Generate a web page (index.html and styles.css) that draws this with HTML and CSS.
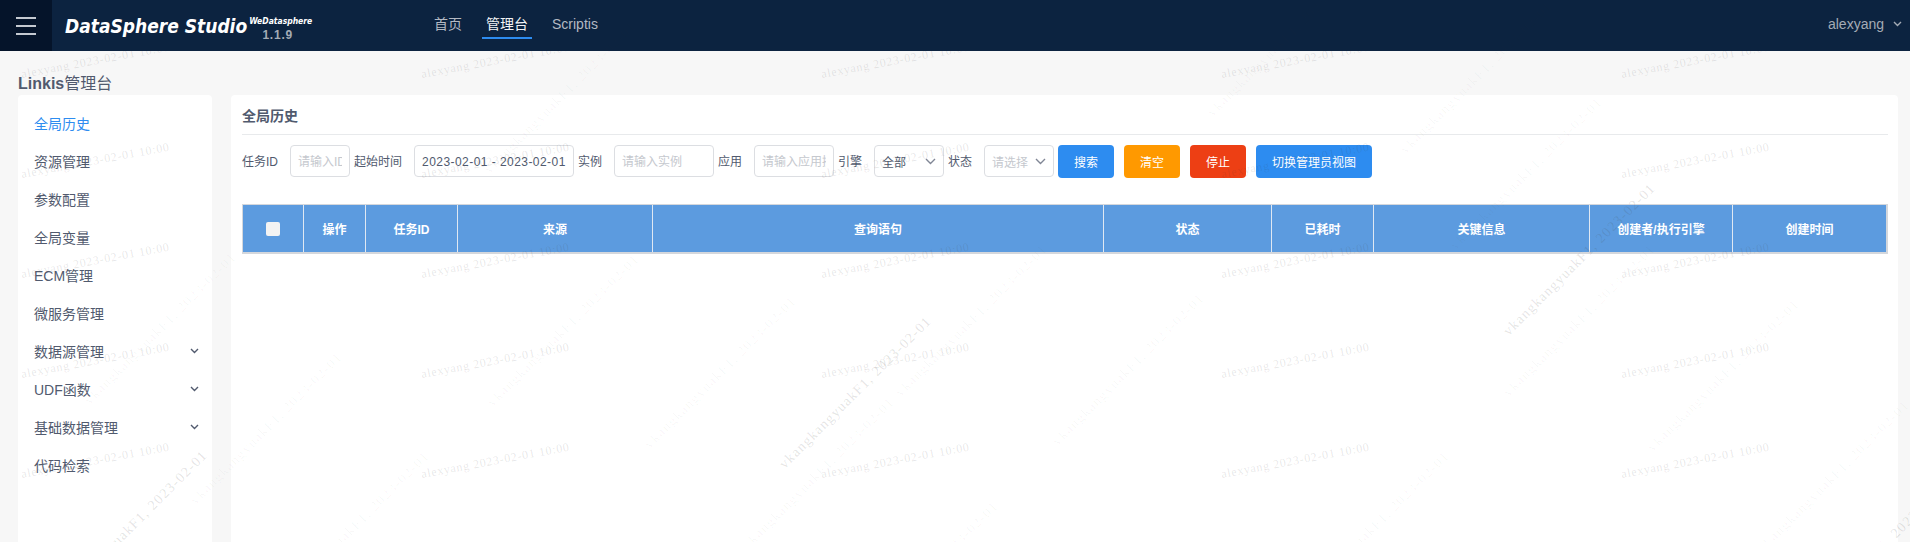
FILE: index.html
```html
<!DOCTYPE html>
<html lang="zh-CN">
<head>
<meta charset="utf-8">
<title>Linkis管理台</title>
<link rel="stylesheet" href="styles.css">
</head>
<body>
<svg class="wm wm-a" width="1910" height="542" aria-hidden="true">
  <defs><text id="wa" class="wa" transform="rotate(-10.5)">alexyang 2023-02-01 10:00</text></defs>
  <use href="#wa" x="22" y="78"/><use href="#wa" x="422" y="78"/><use href="#wa" x="822" y="78"/><use href="#wa" x="1222" y="78"/><use href="#wa" x="1622" y="78"/>
  <use href="#wa" x="22" y="178"/><use href="#wa" x="422" y="178"/><use href="#wa" x="822" y="178"/><use href="#wa" x="1222" y="178"/><use href="#wa" x="1622" y="178"/>
  <use href="#wa" x="22" y="278"/><use href="#wa" x="422" y="278"/><use href="#wa" x="822" y="278"/><use href="#wa" x="1222" y="278"/><use href="#wa" x="1622" y="278"/>
  <use href="#wa" x="22" y="378"/><use href="#wa" x="422" y="378"/><use href="#wa" x="822" y="378"/><use href="#wa" x="1222" y="378"/><use href="#wa" x="1622" y="378"/>
  <use href="#wa" x="22" y="478"/><use href="#wa" x="422" y="478"/><use href="#wa" x="822" y="478"/><use href="#wa" x="1222" y="478"/><use href="#wa" x="1622" y="478"/>
</svg>
<svg class="wm wm-b" width="1910" height="542" aria-hidden="true">
  <defs>
    <text id="vd" class="vd" text-anchor="end" transform="rotate(-45)">vkangkangyuakF1, 2023-02-01</text>
    <text id="vf" class="vf" text-anchor="end" transform="rotate(-45)">vkangkangyuakF1, 2023-02-01</text>
  </defs>
  <use href="#vd" x="208" y="456"/><use href="#vd" x="932" y="322"/><use href="#vd" x="1656" y="189"/><use href="#vf" x="637" y="27"/><use href="#vd" x="1951" y="484"/>
  <use href="#vf" x="237" y="258"/><use href="#vf" x="343" y="358"/><use href="#vf" x="430" y="457"/><use href="#vf" x="640" y="260"/><use href="#vf" x="797" y="302"/><use href="#vf" x="895" y="403"/><use href="#vf" x="999" y="507"/><use href="#vf" x="1048" y="250"/><use href="#vf" x="1205" y="299"/><use href="#vf" x="1450" y="457"/><use href="#vf" x="1553" y="7"/><use href="#vf" x="1603" y="103"/><use href="#vf" x="1656" y="250"/><use href="#vf" x="1800" y="305"/><use href="#vf" x="1910" y="406"/><use href="#vf" x="1360" y="-30"/>
</svg>

<header class="topbar">
  <button class="menu-btn" aria-label="menu"><span></span><span></span><span></span></button>
  <div class="logo">
    <span class="logo-name">DataSphere Studio</span>
    <span class="logo-side"><span class="logo-sup">WeDatasphere</span><span class="logo-ver">1.1.9</span></span>
  </div>
  <nav class="nav">
    <a class="nav-item">首页</a>
    <a class="nav-item active">管理台</a>
    <a class="nav-item">Scriptis</a>
  </nav>
  <div class="user">alexyang
    <svg class="chev" width="9" height="6" viewBox="0 0 9 6"><path d="M1 1l3.5 3.5L8 1"/></svg>
  </div>
</header>

<main class="page">
  <h1 class="page-title">Linkis<span class="page-title-cn">管理台</span></h1>
  <div class="columns">
    <aside class="sidebar">
      <div class="side-item active">全局历史</div>
      <div class="side-item">资源管理</div>
      <div class="side-item">参数配置</div>
      <div class="side-item">全局变量</div>
      <div class="side-item">ECM管理</div>
      <div class="side-item">微服务管理</div>
      <div class="side-item">数据源管理<svg class="chev" width="9" height="6" viewBox="0 0 9 6"><path d="M1 1l3.5 3.5L8 1"/></svg></div>
      <div class="side-item">UDF函数<svg class="chev" width="9" height="6" viewBox="0 0 9 6"><path d="M1 1l3.5 3.5L8 1"/></svg></div>
      <div class="side-item">基础数据管理<svg class="chev" width="9" height="6" viewBox="0 0 9 6"><path d="M1 1l3.5 3.5L8 1"/></svg></div>
      <div class="side-item">代码检索</div>
    </aside>
    <section class="panel">
      <h2 class="panel-title">全局历史</h2>
      <form class="filters">
        <label class="f-label">任务ID</label>
        <input class="f-input w60" placeholder="请输入ID">
        <label class="f-label">起始时间</label>
        <input class="f-input w160 date" value="2023-02-01 - 2023-02-01">
        <label class="f-label">实例</label>
        <input class="f-input w100" placeholder="请输入实例">
        <label class="f-label">应用</label>
        <input class="f-input w80" placeholder="请输入应用接口">
        <label class="f-label">引擎</label>
        <div class="f-select w70"><span>全部</span><svg class="chev" width="11" height="7" viewBox="0 0 11 7"><path d="M1 1l4.5 4.5L10 1"/></svg></div>
        <label class="f-label">状态</label>
        <div class="f-select w70 empty"><span>请选择</span><svg class="chev" width="11" height="7" viewBox="0 0 11 7"><path d="M1 1l4.5 4.5L10 1"/></svg></div>
        <button type="button" class="btn blue w56">搜索</button>
        <button type="button" class="btn orange w56">清空</button>
        <button type="button" class="btn red w56">停止</button>
        <button type="button" class="btn blue w116">切换管理员视图</button>
      </form>
      <div class="grid-head">
        <div class="cell"><span class="check"></span></div>
        <div class="cell">操作</div>
        <div class="cell">任务ID</div>
        <div class="cell">来源</div>
        <div class="cell">查询语句</div>
        <div class="cell">状态</div>
        <div class="cell">已耗时</div>
        <div class="cell">关键信息</div>
        <div class="cell">创建者/执行引擎</div>
        <div class="cell">创建时间</div>
      </div>
    </section>
  </div>
</main>
</body>
</html>
```
FILE: styles.css
```css
* { box-sizing: border-box; }
html, body { margin: 0; height: 100%; }
body {
  position: relative;
  width: 1910px;
  height: 542px;
  overflow: hidden;
  background: #f7f7f7;
  font-family: "Liberation Sans", "Noto Sans CJK SC", sans-serif;
  font-size: 12px;
  color: #515a6e;
}

/* Watermarks */
.wm { position: absolute; left: 0; top: 0; pointer-events: none; }
.wm-a { z-index: 5; }
.wm-b { z-index: 30; }
.wa {
  font-family: "Liberation Serif", serif;
  font-size: 12px;
  letter-spacing: 0.72px;
  fill: rgba(60, 60, 60, 0.12);
}
.vd, .vf {
  font-family: "Liberation Serif", serif;
  font-size: 14px;
  letter-spacing: 1.2px;
}
.vd { fill: rgba(60, 60, 60, 0.14); }
.vf { fill: rgba(60, 60, 60, 0.04); }

/* Top bar */
.topbar {
  position: relative;
  z-index: 10;
  display: flex;
  height: 51px;
  background: #0c2340;
}
.menu-btn {
  display: flex;
  flex-direction: column;
  justify-content: center;
  gap: 6px;
  width: 52px;
  padding: 0 16px;
  border: 0;
  background: #05142a;
}
.menu-btn span { display: block; height: 2px; background: #c4c9d1; }
.logo {
  display: flex;
  width: 243px;
  margin-left: 13px;
  color: #fff;
}
.logo-name {
  padding-top: 15px;
  font-family: "DejaVu Sans Condensed", "DejaVu Sans", sans-serif;
  font-size: 19px;
  line-height: 22px;
  font-weight: 700;
  font-style: italic;
  white-space: nowrap;
}
.logo-side {
  display: flex;
  flex-direction: column;
  align-items: center;
  padding-top: 15px;
  margin-left: 2px;
}
.logo-sup {
  font-family: "DejaVu Sans Condensed", "DejaVu Sans", sans-serif;
  font-size: 8.5px;
  line-height: 12px;
  font-weight: 700;
  font-style: italic;
}
.logo-ver {
  margin-top: 1px;
  margin-right: 6px;
  color: #a4abb5;
  font-size: 12px;
  line-height: 14px;
  font-weight: 700;
  letter-spacing: 0.8px;
}
.nav { display: flex; gap: 16px; margin-left: 122px; }
.nav-item {
  height: 39px;
  padding: 13px 4px 2px;
  border-bottom: 2px solid transparent;
  color: #b3b9c3;
  font-size: 14px;
  line-height: 22px;
}
.nav-item.active { color: #f2f3f5; border-bottom-color: #2d8cf0; }
.user {
  display: flex;
  align-items: center;
  gap: 9px;
  height: 48px;
  margin-left: auto;
  padding-right: 8px;
  color: #a4abb5;
  font-size: 14px;
}
.chev { flex: none; fill: none; stroke: currentColor; stroke-width: 1.4; }

/* Page */
.page { height: 491px; padding: 0 12px 0 18px; }
.page-title {
  margin: 0;
  height: 44px;
  padding-top: 22px;
  color: #515a6e;
  font-size: 16px;
  line-height: 22px;
  font-weight: 700;
}
.page-title-cn { font-weight: 400; }
.columns { display: flex; gap: 19px; height: 447px; }

/* Sidebar */
.sidebar {
  flex: none;
  width: 194px;
  padding-top: 9px;
  background: #fff;
  border-radius: 4px 4px 0 0;
}
.side-item {
  display: flex;
  align-items: center;
  justify-content: space-between;
  height: 38px;
  padding: 0 13px 0 16px;
  color: #515a6e;
  font-size: 14px;
}
.side-item.active { color: #2d8cf0; }

/* Panel */
.panel {
  flex: 1;
  padding: 0 10px 0 11px;
  background: #fff;
  border-radius: 4px 4px 0 0;
}
.panel-title {
  margin: 0;
  height: 40px;
  padding: 10px 0 7px;
  border-bottom: 1px solid #e8eaec;
  color: #515a6e;
  font-size: 14px;
  line-height: 22px;
  font-weight: 700;
}
.filters {
  display: flex;
  align-items: flex-start;
  margin-top: 10px;
}
.f-label {
  padding-top: 1px;
  padding-right: 12px;
  color: #515a6e;
  font-size: 12px;
  line-height: 32px;
  white-space: nowrap;
}
.f-input, .f-select {
  height: 32px;
  margin-right: 4px;
  padding: 1px 7px 0;
  border: 1px solid #dcdee2;
  border-radius: 4px;
  background: transparent;
  color: #515a6e;
  font: inherit;
  font-size: 12px;
}
.f-input::placeholder { color: #c5c8ce; opacity: 1; }
.f-input:focus { outline: none; }
.date { letter-spacing: 0.45px; }
.f-select { display: flex; align-items: center; justify-content: space-between; }
.f-select.empty { color: #c5c8ce; }
.f-select .chev { color: #808695; }
.w56 { width: 56px; }
.w60 { width: 60px; }
.w70 { width: 70px; }
.w80 { width: 80px; }
.w100 { width: 100px; }
.w116 { width: 116px; }
.w160 { width: 160px; }
.btn {
  flex: none;
  height: 33px;
  margin-right: 10px;
  padding: 0;
  border: 0;
  border-radius: 4px;
  color: #fff;
  font: inherit;
  font-size: 12px;
}
.blue { background: #2d8cf0; }
.orange { background: #ff9900; }
.red { background: #ed3f14; }

/* Table head */
.grid-head {
  display: grid;
  grid-template-columns: 61px 62px 92px 195px 451px 168px 102px 216px 143px 1fr;
  height: 50px;
  margin-top: 26px;
  border: 1px solid #d4d7dc;
  border-width: 1px 2px 2px 1px;
  background: #5c9bdf;
}
.cell {
  display: flex;
  align-items: center;
  justify-content: center;
  border-right: 1px solid #dfe8f3;
  color: #fff;
  font-size: 12px;
  font-weight: 700;
}
.cell:last-child { border-right: 0; }
.check {
  width: 14px;
  height: 14px;
  border-radius: 2px;
  background: #f3f3f3;
}
```
